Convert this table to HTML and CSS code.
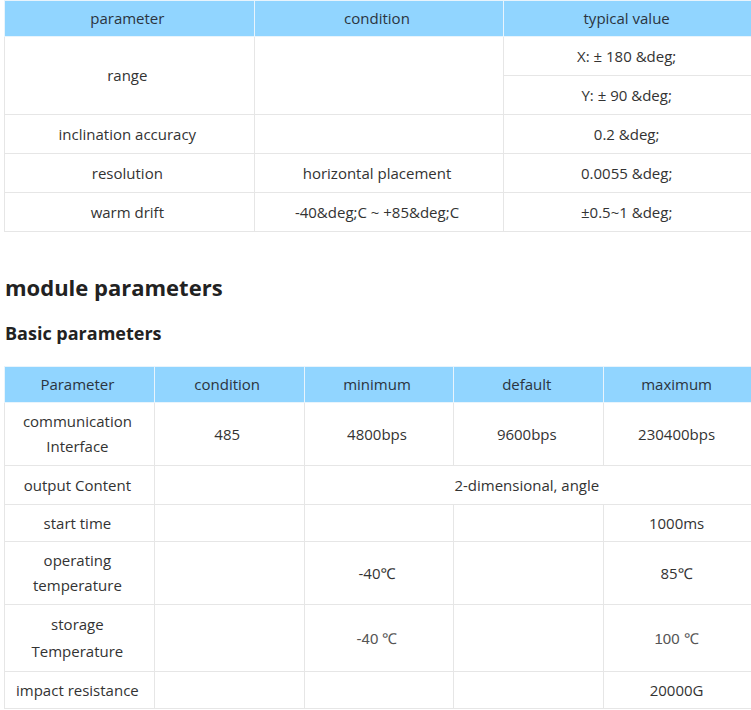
FILE: index.html
```html
<!DOCTYPE html>
<html>
<head>
<meta charset="utf-8">
<link rel="stylesheet" href="styles.css">
</head>
<body>
<div class="page">
  <table class="spec spec-3">
    <thead>
      <tr><th>parameter</th><th>condition</th><th>typical value</th></tr>
    </thead>
    <tbody>
      <tr><td rowspan="2">range</td><td rowspan="2"></td><td>X: ± 180 &amp;deg;</td></tr>
      <tr><td>Y: ± 90 &amp;deg;</td></tr>
      <tr><td>inclination accuracy</td><td></td><td>0.2 &amp;deg;</td></tr>
      <tr><td>resolution</td><td>horizontal placement</td><td>0.0055 &amp;deg;</td></tr>
      <tr><td>warm drift</td><td>-40&amp;deg;C ~ +85&amp;deg;C</td><td>±0.5~1 &amp;deg;</td></tr>
    </tbody>
  </table>

  <h2 class="title">module parameters</h2>
  <h3 class="subtitle">Basic parameters</h3>

  <table class="spec spec-5">
    <thead>
      <tr><th>Parameter</th><th>condition</th><th>minimum</th><th>default</th><th>maximum</th></tr>
    </thead>
    <tbody>
      <tr><td>communication<br>Interface</td><td>485</td><td>4800bps</td><td>9600bps</td><td>230400bps</td></tr>
      <tr><td>output Content</td><td></td><td colspan="3">2-dimensional, angle</td></tr>
      <tr class="short"><td>start time</td><td></td><td></td><td></td><td>1000ms</td></tr>
      <tr><td>operating<br>temperature</td><td></td><td>-40℃</td><td></td><td>85℃</td></tr>
      <tr class="tall"><td>storage<br>Temperature</td><td></td><td class="alt">-40 ℃</td><td></td><td class="alt">100 ℃</td></tr>
      <tr class="short"><td>impact resistance</td><td></td><td></td><td></td><td>20000G</td></tr>
    </tbody>
  </table>
</div>
</body>
</html>
```

FILE: styles.css
```css
html, body {
  margin: 0;
  padding: 0;
  background: #fff;
  overflow: hidden;
}
.page {
  width: 751px;
  overflow: hidden;
  padding-left: 4px;
  box-sizing: border-box;
  font-family: "Open Sans", "Noto Sans", sans-serif;
  font-size: 15px;
  color: #333;
}
.spec {
  border-collapse: collapse;
  width: 750px;
  table-layout: fixed;
}
.spec th, .spec td {
  border: 1px solid #e6e6e6;
  text-align: center;
  vertical-align: middle;
  line-height: 25px;
  padding: 6px 6px 6px 2px;
  font-weight: normal;
}
.spec th {
  background: #91d5ff;
  color: #2b3440;
  border-color: #e8f4fc;
  padding: 5px 6px 5px 2px;
}
.spec td {
  height: 26px;
}
.spec .tall td {
  line-height: 27px;
}
.spec .short td {
  padding-top: 5px;
  padding-bottom: 5px;
}
.spec td.alt {
  color: #555;
  font-family: "Liberation Sans", sans-serif;
}
.title {
  margin: 40px 0 0 1px;
  font-size: 22px;
  line-height: 30px;
  font-weight: bold;
  color: #222;
}
.subtitle {
  margin: 18px 0 0 1px;
  font-size: 18px;
  line-height: 26px;
  font-weight: bold;
  color: #222;
}
.spec-5 {
  margin-top: 20px;
}
```
